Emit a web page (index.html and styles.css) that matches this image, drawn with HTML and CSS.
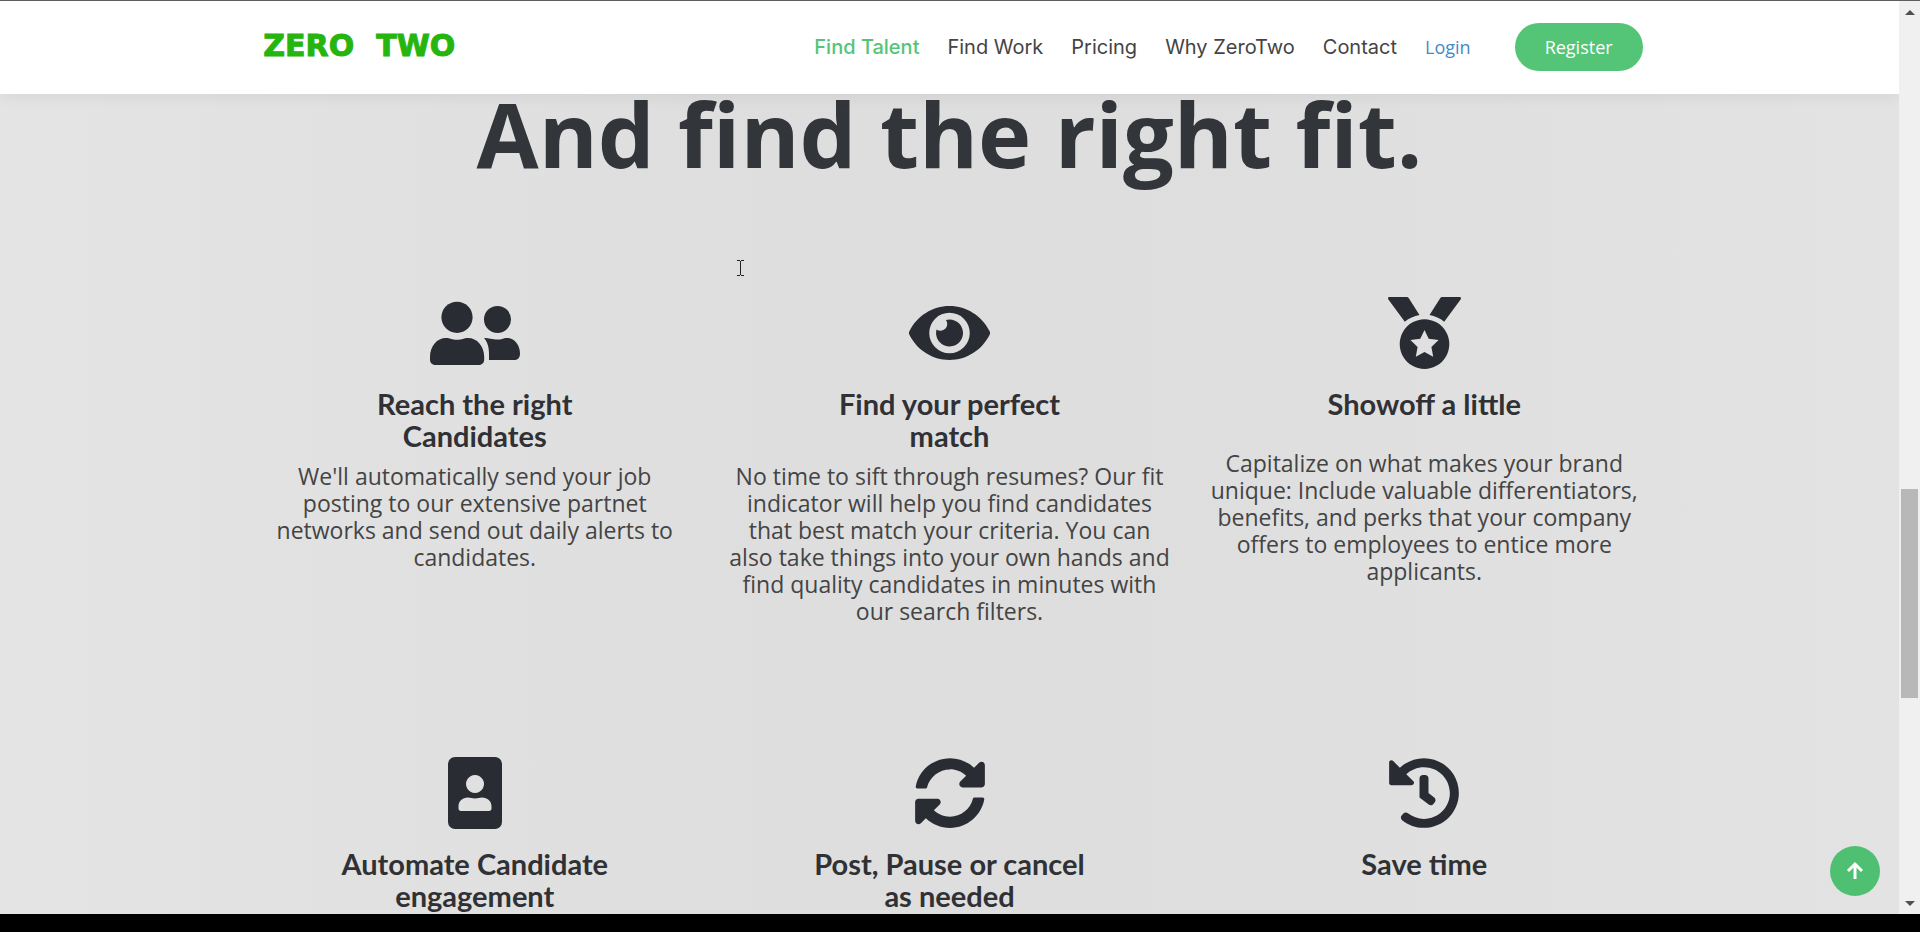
FILE: index.html
```html
<!DOCTYPE html>
<html lang="en">
<head>
    <meta charset="UTF-8">
    <meta name="viewport" content="width=device-width, initial-scale=1.0">
    <title>Zero Two - Find Talent</title>
    <link rel="stylesheet" href="styles.css">
</head>
<body>
    <div class="window">
        <div class="page">
            <header class="header">
                <div class="container header-inner">
                    <a class="logo" href="#"><span>ZERO</span><span>TWO</span></a>
                    <nav class="nav">
                        <a class="nav-link active" href="#">Find Talent</a>
                        <a class="nav-link" href="#">Find Work</a>
                        <a class="nav-link" href="#">Pricing</a>
                        <a class="nav-link" href="#">Why ZeroTwo</a>
                        <a class="nav-link" href="#">Contact</a>
                    </nav>
                    <a class="login" href="#">Login</a>
                    <button class="register" type="button">Register</button>
                </div>
            </header>

            <main class="features">
                <h1 class="features-title">And find the right fit.</h1>
                <div class="features-grid">
                    <section class="feature">
                        <svg class="icon" width="90" height="72" viewBox="0 0 90 72" aria-hidden="true">
                            <circle cx="27" cy="20.3" r="15.6"/>
                            <circle cx="67.500" cy="22.4" r="13.5"/>
                            <path d="M16 41c4 0 6 1.8 11 1.8S34 41 38 41c9 0 16.200 8 16.200 19v2.500c0 3.200-2.200 5.500-5.200 5.500H5.200C2.200 68 0 65.700 0 62.500V60C0 49 7 41 16 41z"/>
                            <path d="M54 41c5 0 8 1.500 14 1.500S72 41 77 41c7.500 0 13 7 13 15.500 0 4-2 6.500-5.500 6.500H59v-6c0-7-1.500-12-5-16z"/>
                        </svg>
                        <h2 class="feature-title">Reach the right Candidates</h2>
                        <p class="feature-text">We'll automatically send your job<br>posting to our extensive partnet networks and send out daily alerts to candidates.</p>
                    </section>
                    <section class="feature">
                        <svg class="icon" width="81" height="72" viewBox="0 0 576 512" aria-hidden="true">
                            <path d="M572.52 241.4C518.29 135.59 410.93 64 288 64S57.68 135.64 3.48 241.41a32.35 32.35 0 0 0 0 29.19C57.71 376.41 165.07 448 288 448s230.32-71.64 284.52-177.41a32.35 32.35 0 0 0 0-29.19zM288 400a144 144 0 1 1 144-144 143.93 143.93 0 0 1-144 144zm0-240a95.31 95.31 0 0 0-25.31 3.79 47.85 47.85 0 0 1-66.9 66.9A95.78 95.78 0 1 0 288 160z"/>
                        </svg>
                        <h2 class="feature-title">Find your perfect match</h2>
                        <p class="feature-text">No time to sift through resumes? Our fit indicator will help you find candidates that best match your criteria. You can also take things into your own hands and find quality candidates in minutes with our search filters.</p>
                    </section>
                    <section class="feature">
                        <svg class="icon" width="73" height="72" viewBox="0 0 73 72" aria-hidden="true">
                            <path d="M1.500 0H18c1.500 0 2.300.4 3 1.600L31.500 18c-5.500 1-10.500 3.200-14.700 6.700L.4 2.400C-.4 1 .2 0 1.500 0z"/>
                            <path d="M71.500 0H55c-1.500 0-2.300.4-3 1.600L41.500 18c5.500 1 10.500 3.200 14.700 6.700L72.600 2.400C73.400 1 72.800 0 71.500 0z"/>
                            <path fill-rule="evenodd" d="M36.500 22.300a24.800 24.800 0 1 0 .01 0zM36.500 33l4.200 8.800 9.900 1.300-7.200 6.900 1.800 9.800-8.700-4.700-8.700 4.700 1.800-9.800-7.200-6.900 9.900-1.300z"/>
                        </svg>
                        <h2 class="feature-title short">Showoff a little</h2>
                        <p class="feature-text">Capitalize on what makes your brand unique: Include valuable differentiators, benefits, and perks that your company offers to employees to entice more applicants.</p>
                    </section>
                    <section class="feature">
                        <svg class="icon" width="54" height="72" viewBox="0 0 54 72" aria-hidden="true">
                            <path fill-rule="evenodd" d="M7 0h40a7 7 0 0 1 7 7v58a7 7 0 0 1-7 7H7a7 7 0 0 1-7-7V7a7 7 0 0 1 7-7zM27 18a9 9 0 1 0 .01 0zM20 40.500c-5.500 0-9.500 3.800-9.500 8.800v2.200c0 1.500 1 2.500 2.500 2.500h28c1.500 0 2.500-1 2.500-2.500v-2.200c0-5-4-8.800-9.500-8.800-2.500 0-4 1-7 1s-4.500-1-7-1z"/>
                        </svg>
                        <h2 class="feature-title">Automate Candidate engagement</h2>
                    </section>
                    <section class="feature">
                        <svg class="icon" width="72" height="72" viewBox="0 0 512 512" aria-hidden="true">
                            <path d="M370.72 133.28C339.458 104.008 298.888 87.962 255.848 88c-77.458.068-144.328 53.178-162.791 126.85-1.344 5.363-6.122 9.15-11.651 9.15H24.103c-7.498 0-13.194-6.807-11.807-14.176C33.933 94.924 134.813 8 256 8c66.448 0 126.791 26.136 171.315 68.685L463.03 40.97C478.149 25.851 504 36.559 504 57.941V192c0 13.255-10.745 24-24 24H345.941c-21.382 0-32.09-25.851-16.971-40.971l41.75-41.749zM32 296h134.059c21.382 0 32.09 25.851 16.971 40.971l-41.75 41.75c31.262 29.273 71.835 45.319 114.876 45.28 77.418-.07 144.315-53.144 162.787-126.849 1.344-5.363 6.122-9.15 11.651-9.15h57.304c7.498 0 13.194 6.807 11.807 14.176C478.067 417.076 377.187 504 256 504c-66.448 0-126.791-26.136-171.315-68.685L48.97 471.03C33.851 486.149 8 475.441 8 454.059V320c0-13.255 10.745-24 24-24z"/>
                        </svg>
                        <h2 class="feature-title">Post, Pause or cancel as needed</h2>
                    </section>
                    <section class="feature">
                        <svg class="icon" width="72" height="72" viewBox="0 0 512 512" aria-hidden="true">
                            <path d="M504 255.531c.253 136.64-111.18 248.372-247.82 248.468-59.015.042-113.223-20.53-155.822-54.911-11.077-8.94-11.905-25.541-1.839-35.607l11.267-11.267c8.609-8.609 22.353-9.551 31.891-1.984C173.062 425.135 212.781 440 256 440c101.705 0 184-82.311 184-184 0-101.705-82.311-184-184-184-48.814 0-93.149 18.969-126.068 49.932l50.754 50.754c10.08 10.08 2.941 27.314-11.313 27.314H24c-8.837 0-16-7.163-16-16V38.627c0-14.254 17.234-21.393 27.314-11.314l49.372 49.372C129.209 34.136 189.552 8 256 8c136.81 0 247.747 110.78 248 247.531zm-180.912 78.784l9.823-12.63c8.138-10.463 6.253-25.542-4.21-33.679L288 256.349V152c0-13.255-10.745-24-24-24h-16c-13.255 0-24 10.745-24 24v135.651l65.409 50.874c10.463 8.137 25.541 6.253 33.679-4.21z"/>
                        </svg>
                        <h2 class="feature-title short">Save time</h2>
                    </section>
                </div>
            </main>

            <button class="back-to-top" type="button" aria-label="Back to top">
                <svg width="18" height="20" viewBox="0 0 18 20" aria-hidden="true">
                    <path d="M9 18V3M2 10l7-7 7 7" fill="none" stroke="#fff" stroke-width="3"/>
                </svg>
            </button>
            <svg class="cursor" width="7" height="16" viewBox="0 0 7 16" aria-hidden="true">
                <path d="M0 .5h3M4 .5h3M3.500 1v14M0 15.500h3M4 15.500h3" fill="none" stroke="#222"/>
            </svg>
        </div>

        <div class="scrollbar" aria-hidden="true">
            <svg class="scroll-arrow" width="10" height="5" viewBox="0 0 10 5"><path d="M0 5l5-5 5 5z"/></svg>
            <div class="scroll-track">
                <div class="scroll-before"></div>
                <div class="scroll-thumb"></div>
                <div class="scroll-after"></div>
            </div>
            <svg class="scroll-arrow" width="10" height="5" viewBox="0 0 10 5"><path d="M0 0l5 5 5-5z"/></svg>
        </div>
    </div>
</body>
</html>
```
FILE: styles.css
```css
* {
    box-sizing: border-box;
}
body {
    margin: 0;
    height: 100vh;
    overflow: hidden;
    background: #000;
    font-family: "Open Sans", "Noto Sans", sans-serif;
    color: #444;
}
a {
    text-decoration: none;
}
button {
    border: 0;
    padding: 0;
    color: #fff;
    font-family: inherit;
    cursor: pointer;
}

/* window */
.window {
    display: flex;
    height: calc(100vh - 18px);
    border-top: 1px solid #5f5b5e;
    overflow: hidden;
}
.page {
    position: relative;
    flex: 1;
    overflow: hidden;
    background: linear-gradient(90deg, #e4e4e4, #dedede 40%, #dedede 60%, #e3e3e3);
}
.container {
    width: 73%;
    margin: 0 auto;
}

/* header */
.header {
    position: relative;
    background: #fff;
    box-shadow: 0 2px 15px rgba(0, 0, 0, 0.07);
}
.header-inner {
    display: flex;
    align-items: center;
    height: 93px;
    padding-bottom: 2px;
}
.logo {
    display: flex;
    gap: 22px;
    margin-right: auto;
    padding: 0 0 2px 7px;
    color: #26b50f;
    font: bold 30px/40px "DejaVu Sans", sans-serif;
    -webkit-text-stroke: 1px #26b50f;
}
.nav {
    display: flex;
    gap: 28px;
}
.nav-link {
    color: #444;
    font: 400 20px/24px Inter, sans-serif;
}
.nav-link.active {
    color: #54c576;
    font-weight: 500;
}
.login {
    margin-left: 28px;
    color: #428bca;
    font-size: 18px;
    line-height: 24px;
}
.register {
    width: 128px;
    height: 48px;
    margin-left: 44px;
    border-radius: 24px;
    background: #54c576;
    font-size: 18px;
}

/* features */
.features-title {
    margin: 0 0 125px;
    color: #323539;
    font-size: 90px;
    line-height: 78px;
    text-align: center;
}
.features-grid {
    display: grid;
    grid-template-columns: repeat(3, 1fr);
    row-gap: 132px;
    width: 75%;
    margin: 0 auto;
}
.feature {
    display: flex;
    flex-direction: column;
    align-items: center;
    padding: 0 16px;
    text-align: center;
}
.icon {
    fill: #292d33;
}
.feature-title {
    max-width: 290px;
    margin: 19px 0 11px;
    color: #303135;
    font: bold 29px/32px Lato, sans-serif;
}
.feature-title.short {
    margin-bottom: 30px;
}
.feature-text {
    margin: 0;
    font-size: 23px;
    line-height: 27px;
}

/* overlays */
.back-to-top {
    position: absolute;
    right: 19px;
    bottom: 18px;
    display: flex;
    align-items: center;
    justify-content: center;
    width: 50px;
    height: 50px;
    border-radius: 50%;
    background: #4fc071;
}
.cursor {
    position: absolute;
    left: 737px;
    top: 259px;
}

/* scrollbar */
.scrollbar {
    display: flex;
    flex-direction: column;
    align-items: center;
    width: 21px;
    padding: 9px 2px 8px;
    background: #f0f0f0;
}
.scroll-arrow {
    fill: #505050;
}
.scroll-track {
    display: flex;
    flex: 1;
    flex-direction: column;
    align-self: stretch;
}
.scroll-before {
    flex: 474;
}
.scroll-thumb {
    flex: 209;
    background: #b8b8b8;
}
.scroll-after {
    flex: 203;
}
```
